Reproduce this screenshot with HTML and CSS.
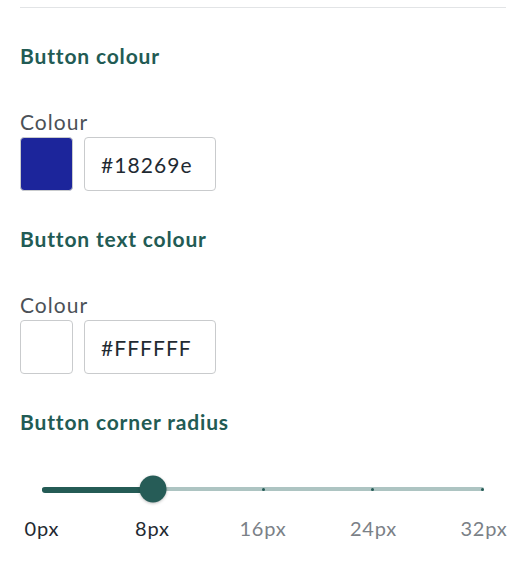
FILE: index.html
```html
<!DOCTYPE html>
<html lang="en">
  <head>
    <meta charset="UTF-8" />
    <meta name="viewport" content="width=device-width, initial-scale=1.0" />
    <title>Button settings</title>
    <link rel="stylesheet" href="styles.css">
  </head>
  <body>
    <div class="panel">
      <section class="setting">
        <h3 class="setting-title">Button colour</h3>
        <div class="colour-field">
          <label class="field-label" for="buttonColour">Colour</label>
          <div class="colour-row">
            <span class="swatch" style="background: #1c259b"></span>
            <input class="hex-input" id="buttonColour" type="text" value="#18269e" />
          </div>
        </div>
      </section>

      <section class="setting">
        <h3 class="setting-title">Button text colour</h3>
        <div class="colour-field">
          <label class="field-label" for="textColour">Colour</label>
          <div class="colour-row">
            <span class="swatch" style="background: #ffffff"></span>
            <input class="hex-input" id="textColour" type="text" value="#FFFFFF" />
          </div>
        </div>
      </section>

      <section class="setting">
        <h3 class="setting-title">Button corner radius</h3>
        <div class="slider">
          <div class="slider-track">
            <div class="slider-fill" style="width: 25%"></div>
            <div class="slider-ticks">
              <span class="tick"></span>
              <span class="tick"></span>
              <span class="tick"></span>
              <span class="tick"></span>
              <span class="tick"></span>
            </div>
            <span class="slider-thumb" style="left: 25%"></span>
          </div>
          <div class="slider-labels">
            <span class="slider-label active" style="left: 0%">0px</span>
            <span class="slider-label active" style="left: 25%">8px</span>
            <span class="slider-label" style="left: 50%">16px</span>
            <span class="slider-label" style="left: 75%">24px</span>
            <span class="slider-label" style="left: 100%">32px</span>
          </div>
        </div>
      </section>
    </div>
  </body>
</html>
```

FILE: styles.css
```css
/* Reset */
* {
  margin: 0;
  padding: 0;
  box-sizing: border-box;
}

body {
  font-family: "Lato", "Noto Sans", sans-serif;
  background: #ffffff;
  color: #4b5157;
  overflow: hidden;
}

/* Panel */
.panel {
  margin: 7px 22px 0 20px;
  border-top: 1px solid #e2e4e6;
  padding-top: 36px;
}

.setting-title {
  font-size: 21px;
  font-weight: 700;
  color: #225b54;
  line-height: 24px;
  letter-spacing: 0.04em;
}

/* Colour fields */
.colour-field {
  margin-top: 42px;
  margin-bottom: 36px;
}

.field-label {
  display: block;
  font-size: 21px;
  font-weight: 400;
  line-height: 24px;
  color: #4b5157;
  letter-spacing: 0.05em;
  margin-bottom: 3px;
}

.colour-row {
  display: flex;
  gap: 11px;
}

.swatch {
  width: 53px;
  height: 54px;
  border: 1px solid #c9cbcd;
  border-radius: 4px;
}

.hex-input {
  width: 132px;
  height: 54px;
  border: 1px solid #c9cbcd;
  border-radius: 4px;
  font-family: inherit;
  font-size: 21px;
  color: #1f2a32;
  padding: 0 16px;
  letter-spacing: 0.05em;
  background: #ffffff;
}

.hex-input:focus {
  outline: none;
}

/* Slider */
.slider {
  margin: 54px 0 0 22px;
  width: 442px;
}

.slider-track {
  position: relative;
  height: 4px;
  border-radius: 2px;
  background: #adc4c2;
}

.slider-fill {
  height: 6px;
  margin-top: -1px;
  border-radius: 3px;
  background: #245b55;
}

.slider-ticks {
  position: absolute;
  top: 1px;
  left: 0;
  right: 0;
  display: flex;
  justify-content: space-between;
}

.tick {
  width: 3px;
  height: 3px;
  margin-top: -0.5px;
  border-radius: 50%;
  background: #245b55;
}

.slider-thumb {
  position: absolute;
  top: 50%;
  width: 27px;
  height: 27px;
  border-radius: 50%;
  background: #265c57;
  transform: translate(-50%, -50%);
  box-shadow: 0 1px 3px rgba(0, 0, 0, 0.25);
}

.slider-labels {
  position: relative;
  height: 24px;
  margin-top: 25px;
}

.slider-label {
  position: absolute;
  top: 0;
  transform: translateX(-50%);
  font-size: 20px;
  line-height: 24px;
  letter-spacing: 0.04em;
  color: #7b8187;
}

.slider-label.active {
  color: #1f2a32;
}
```
